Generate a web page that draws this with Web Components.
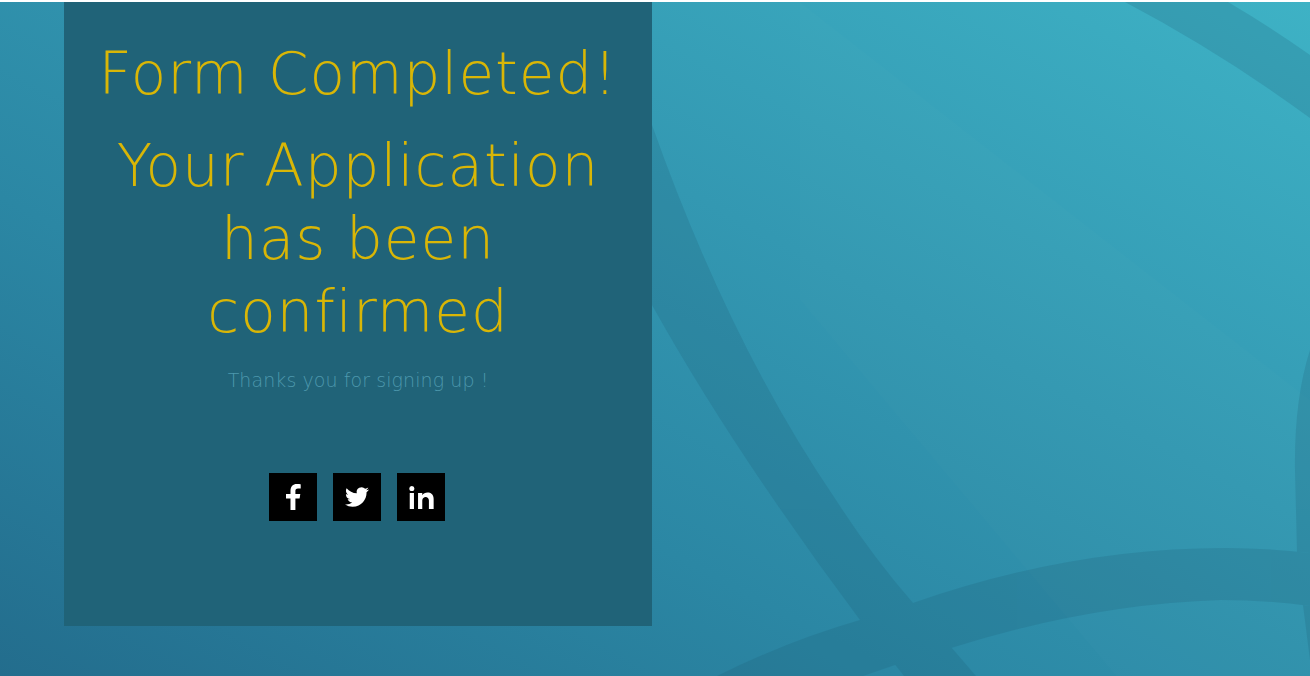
<!DOCTYPE html>
<html lang="en"><head><meta charset="utf-8"><title>Form Completed</title>
<style>html,body{margin:0;background:#fff;height:100%;overflow:hidden}</style></head>
<body>
<signup-page>
  <confirm-card>
    <card-title>Form Completed!</card-title>
    <card-title>Your Application has been confirmed</card-title>
    <card-note>Thanks you for signing up !</card-note>
    <social-row>
      <social-link kind="facebook" label="Facebook"></social-link>
      <social-link kind="twitter" label="Twitter"></social-link>
      <social-link kind="linkedin" label="LinkedIn"></social-link>
    </social-row>
  </confirm-card>
</signup-page>
<script>
const make=(name,css,html)=>customElements.define(name,class extends HTMLElement{
  constructor(){super();this.attachShadow({mode:'open'}).innerHTML=`<style>${css}</style>${html}`;}
});
make('signup-page',`
  :host{display:block;position:relative;height:674px;margin-top:2px;padding:0 0 0 64px;box-sizing:border-box;overflow:hidden;
    background:linear-gradient(28deg,#236d8d 0%,#2b87a4 35%,#3398b2 62%,#3eb2c5 100%)}
  svg{position:absolute;inset:0;width:1310px;height:674px}
  .c{position:relative;display:block}`,
  `<svg viewBox="0 2 1310 674" aria-hidden="true">
   <g fill="#fff" fill-opacity=".012"><path d="M800 2L1310 400V676H1116L800 300Z"/></g>
   <g fill="#1c5a72" opacity=".2">
    <path d="M1125 2H1228Q1272 28 1310 55V118Q1220 52 1125 2Z"/>
    <path d="M652 125Q730 345 836 500Q872 556 913 603L976 676H904L860 620Q815 560 774 500Q705 400 652 305Z"/>
    <path d="M717 676Q790 640 860 620Q885 610 913 603Q1070 548 1225 548Q1265 548 1310 553V606Q1265 600 1221 600Q1090 604 951 648L895 665L863 676Z"/>
    <path d="M1310 350Q1294 400 1295 470Q1296 510 1297 552L1310 553Z"/>
    <path d="M1303 605L1310 660V606Z"/>
  </g></svg><div class="c"><slot></slot></div>`);
make('confirm-card',`
  :host{display:block;width:588px;height:624px;box-sizing:border-box;background:#206378;padding:36px 20px 0;text-align:center}`,
  `<slot></slot>`);
make('card-title',`
  :host{display:block;font:200 58px/73px "DejaVu Sans","Liberation Sans",sans-serif;color:#d9b606;margin-bottom:19px;letter-spacing:1px}`,
  `<slot></slot>`);
make('card-note',`
  :host{display:block;font:200 19px/24px "DejaVu Sans","Liberation Sans",sans-serif;color:#4d98ad;margin-top:1px;letter-spacing:.08px}`,
  `<slot></slot>`);
make('social-row',`
  :host{display:flex;justify-content:center;gap:16px;margin-top:81px;padding-right:2px}`,`<slot></slot>`);
const paths={
 facebook:'<svg viewBox="0 0 15 26" width="15" height="26"><path d="M4.500 26V14.500H0V10h4.500V6.800C4.500 2.400 6.900 0 10.800 0c1.800 0 3.400.1 3.900.2v4.400h-2.700c-2 0-2.600 1-2.600 2.400V10h4.900l-.7 4.500H9.400V26z"/></svg>',
 twitter:'<svg viewBox="0 0 24 24" width="24" height="24"><path d="M23.953 4.570a10 10 0 01-2.825.775 4.958 4.958 0 002.163-2.723c-.951.555-2.005.959-3.127 1.184a4.920 4.920 0 00-8.384 4.482C7.690 8.095 4.067 6.130 1.640 3.162a4.822 4.822 0 00-.666 2.475c0 1.710.870 3.213 2.188 4.096a4.904 4.904 0 01-2.228-.616v.060a4.923 4.923 0 003.946 4.827 4.996 4.996 0 01-2.212.085 4.936 4.936 0 004.604 3.417 9.867 9.867 0 01-6.102 2.105c-.390 0-.779-.023-1.170-.067a13.995 13.995 0 007.557 2.209c9.053 0 13.998-7.496 13.998-13.985 0-.210 0-.420-.015-.630A9.935 9.935 0 0024 4.590z"/></svg>',
 linkedin:'<svg viewBox="3 3 19 18" width="25" height="23"><path d="M6.940 5a2 2 0 1 1-4-.002 2 2 0 0 1 4 .002zM6.600 8.480H3.300V21h3.300V8.480zm6.500 0H9.800V21h3.300v-6.570c0-3.660 5.200-4 5.200 0V21H22v-7.930c0-6.170-7.200-5.940-8.900-2.910V8.480z"/></svg>'};
customElements.define('social-link',class extends HTMLElement{
  constructor(){super();const k=this.getAttribute('kind');
    this.attachShadow({mode:'open'}).innerHTML=`<style>:host{display:flex;width:48px;height:48px;background:#000;align-items:center;justify-content:center}svg{fill:#fff;display:block}</style>${paths[k]||''}`;
    this.setAttribute('role','img');this.setAttribute('aria-label',this.getAttribute('label')||k);}
});
</script>
</body></html>
